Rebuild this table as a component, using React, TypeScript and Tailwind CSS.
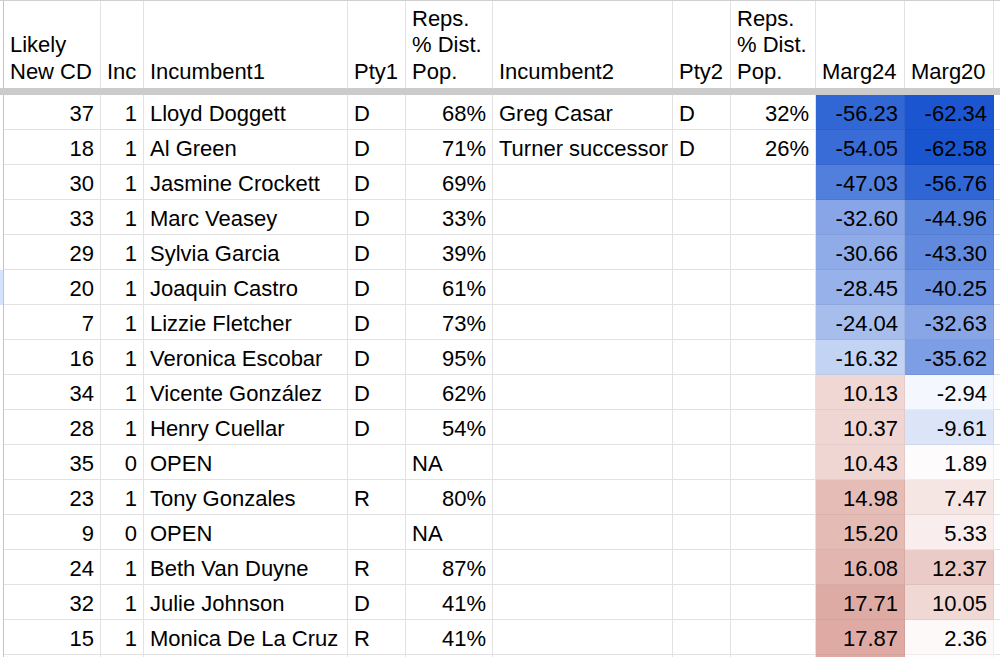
const widths = [
  'w-[97px]',
  'w-[43px]',
  'w-[204px]',
  'w-[58px]',
  'w-[87px]',
  'w-[180px]',
  'w-[58px]',
  'w-[85px]',
  'w-[89px]',
  'w-[89px]',
];

type Row = {
  cd: string;
  inc: string;
  name1: string;
  pty1: string;
  reps1: string;
  name2?: string;
  pty2?: string;
  reps2?: string;
  m24: number;
  m20: number;
};

const rows: Row[] = [
  { cd: '37', inc: '1', name1: 'Lloyd Doggett', pty1: 'D', reps1: '68%', name2: 'Greg Casar', pty2: 'D', reps2: '32%', m24: -56.23, m20: -62.34 },
  { cd: '18', inc: '1', name1: 'Al Green', pty1: 'D', reps1: '71%', name2: 'Turner successor', pty2: 'D', reps2: '26%', m24: -54.05, m20: -62.58 },
  { cd: '30', inc: '1', name1: 'Jasmine Crockett', pty1: 'D', reps1: '69%', m24: -47.03, m20: -56.76 },
  { cd: '33', inc: '1', name1: 'Marc Veasey', pty1: 'D', reps1: '33%', m24: -32.6, m20: -44.96 },
  { cd: '29', inc: '1', name1: 'Sylvia Garcia', pty1: 'D', reps1: '39%', m24: -30.66, m20: -43.3 },
  { cd: '20', inc: '1', name1: 'Joaquin Castro', pty1: 'D', reps1: '61%', m24: -28.45, m20: -40.25 },
  { cd: '7', inc: '1', name1: 'Lizzie Fletcher', pty1: 'D', reps1: '73%', m24: -24.04, m20: -32.63 },
  { cd: '16', inc: '1', name1: 'Veronica Escobar', pty1: 'D', reps1: '95%', m24: -16.32, m20: -35.62 },
  { cd: '34', inc: '1', name1: 'Vicente González', pty1: 'D', reps1: '62%', m24: 10.13, m20: -2.94 },
  { cd: '28', inc: '1', name1: 'Henry Cuellar', pty1: 'D', reps1: '54%', m24: 10.37, m20: -9.61 },
  { cd: '35', inc: '0', name1: 'OPEN', pty1: '', reps1: 'NA', m24: 10.43, m20: 1.89 },
  { cd: '23', inc: '1', name1: 'Tony Gonzales', pty1: 'R', reps1: '80%', m24: 14.98, m20: 7.47 },
  { cd: '9', inc: '0', name1: 'OPEN', pty1: '', reps1: 'NA', m24: 15.2, m20: 5.33 },
  { cd: '24', inc: '1', name1: 'Beth Van Duyne', pty1: 'R', reps1: '87%', m24: 16.08, m20: 12.37 },
  { cd: '32', inc: '1', name1: 'Julie Johnson', pty1: 'D', reps1: '41%', m24: 17.71, m20: 10.05 },
  { cd: '15', inc: '1', name1: 'Monica De La Cruz', pty1: 'R', reps1: '41%', m24: 17.87, m20: 2.36 },
];

// color scale: blue at the low end, white at 0, muted red at the high end
function scaleColor(v: number) {
  const blue = [26, 85, 208];
  const red = [222, 170, 163];
  const t = v < 0 ? Math.min(1, -v / 62.58) : Math.pow(Math.min(1, v / 17.87), 1.35);
  const end = v < 0 ? blue : red;
  const c = end.map((e) => Math.round(255 + (e - 255) * t));
  return `rgb(${c[0]}, ${c[1]}, ${c[2]})`;
}

function Cell({
  w,
  right,
  children,
  color,
}: {
  w: string;
  right?: boolean;
  children?: React.ReactNode;
  color?: string;
}) {
  return (
    <div
      className={`${w} flex h-full shrink-0 items-center truncate border-r border-b px-[6px] pt-[2px] ${
        right ? 'justify-end' : 'justify-start'
      } ${color ? 'border-black/5' : 'border-[#e2e2e2]'}`}
      style={color ? { backgroundColor: color } : undefined}
    >
      {children}
    </div>
  );
}

function HeadCell({ w, children }: { w: string; children?: React.ReactNode }) {
  return (
    <div className={`${w} flex h-full shrink-0 items-end border-r border-[#e2e2e2] px-[6px] pb-[3px] leading-[26.5px]`}>
      <div>{children}</div>
    </div>
  );
}

export default function App() {
  return (
    <div className="h-[657px] w-[1000px] overflow-hidden bg-white font-['Liberation_Sans',Arial,sans-serif] text-[22px] text-black">
      <div className="flex h-[88px] border-t border-[#cfcfcf]">
        <div className="h-full w-[4px] shrink-0 border-r border-[#c4c4c4]" />
        <HeadCell w={widths[0]}>
          Likely
          <br />
          New CD
        </HeadCell>
        <HeadCell w={widths[1]}>Inc</HeadCell>
        <HeadCell w={widths[2]}>Incumbent1</HeadCell>
        <HeadCell w={widths[3]}>Pty1</HeadCell>
        <HeadCell w={widths[4]}>
          Reps.
          <br />% Dist.
          <br />
          Pop.
        </HeadCell>
        <HeadCell w={widths[5]}>Incumbent2</HeadCell>
        <HeadCell w={widths[6]}>Pty2</HeadCell>
        <HeadCell w={widths[7]}>
          Reps.
          <br />% Dist.
          <br />
          Pop.
        </HeadCell>
        <HeadCell w={widths[8]}>Marg24</HeadCell>
        <HeadCell w={widths[9]}>Marg20</HeadCell>
        <div className="h-full flex-1" />
      </div>
      <div className="h-[7px] bg-[#cbcbcb]" />
      {rows.map((r, i) => (
        <div key={i} className="flex h-[35px]">
          <div
            className={`h-full w-[4px] shrink-0 border-r border-[#c4c4c4] ${
              i === 5 ? 'bg-[#d3e3fd]' : 'bg-white'
            }`}
          />
          <Cell w={widths[0]} right>
            {r.cd}
          </Cell>
          <Cell w={widths[1]} right>
            {r.inc}
          </Cell>
          <Cell w={widths[2]}>{r.name1}</Cell>
          <Cell w={widths[3]}>{r.pty1}</Cell>
          <Cell w={widths[4]} right={r.reps1 !== 'NA'}>
            {r.reps1}
          </Cell>
          <Cell w={widths[5]}>{r.name2}</Cell>
          <Cell w={widths[6]}>{r.pty2}</Cell>
          <Cell w={widths[7]} right>
            {r.reps2}
          </Cell>
          <Cell w={widths[8]} right color={scaleColor(r.m24)}>
            {r.m24.toFixed(2)}
          </Cell>
          <Cell w={widths[9]} right color={scaleColor(r.m20)}>
            {r.m20.toFixed(2)}
          </Cell>
          <div className="h-full flex-1 border-b border-[#e2e2e2]" />
        </div>
      ))}
      <div className="flex h-[35px]">
        <div className="h-full w-[4px] shrink-0 border-r border-[#c4c4c4]" />
        {widths.slice(0, 8).map((w, i) => (
          <Cell key={i} w={w} />
        ))}
        <Cell w={widths[8]} color={scaleColor(18.5)} />
        <Cell w={widths[9]} color={scaleColor(1.2)} />
        <div className="h-full flex-1" />
      </div>
    </div>
  );
}
